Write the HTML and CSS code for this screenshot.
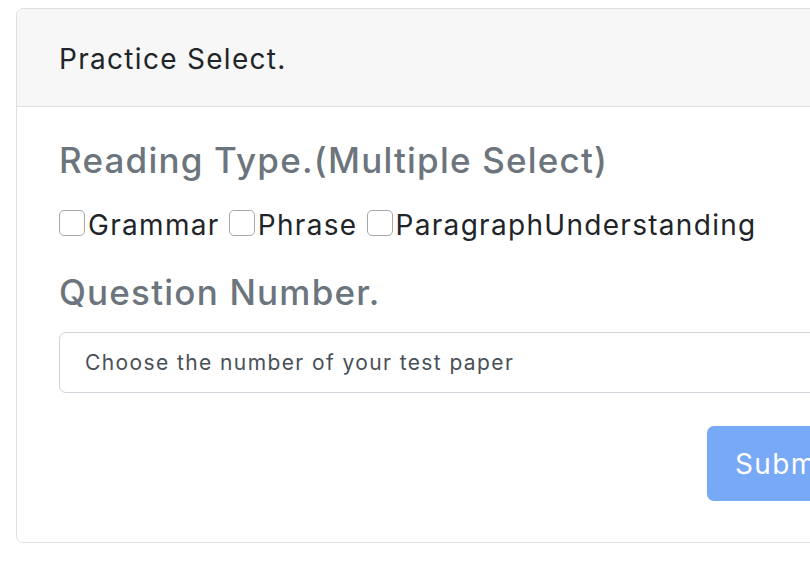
FILE: index.html
```html
<!DOCTYPE html>
<html>
<head>
<meta charset="utf-8">
<link rel="stylesheet" href="styles.css">
</head>
<body>
<div class="card">
  <div class="card-header">Practice Select.</div>
  <div class="card-body">
    <h5 class="section-title">Reading Type.(Multiple Select)</h5>
    <div class="checks"><input type="checkbox" class="chk"><span class="lbl">Grammar</span> <input type="checkbox" class="chk"><span class="lbl">Phrase</span> <input type="checkbox" class="chk"><span class="lbl">ParagraphUnderstanding</span></div>
    <h5 class="section-title">Question Number.</h5>
    <div class="select">Choose the number of your test paper</div>
    <div class="actions"><button class="btn" disabled>Submit</button></div>
  </div>
</div>
</body>
</html>
```
FILE: styles.css
```css
html, body {
  margin: 0;
  padding: 0;
  overflow: hidden;
  background: #fff;
}
body {
  padding: 8px 0 0 16px;
  font-family: Inter, "Liberation Sans", sans-serif;
  color: #212529;
}
.card {
  width: 888px;
  border: 1px solid #dfdfdf;
  border-radius: 7px;
  background: #fff;
  overflow: hidden;
}
.card-header {
  background: #f7f7f7;
  border-bottom: 1px solid #dfdfdf;
  padding: 29px 42px 26px;
  font-size: 28px;
  line-height: 42px;
  letter-spacing: 1.3px;
}
.card-body {
  padding: 32px 42px 41px 42px;
}
.section-title {
  margin: 0;
  font-size: 35px;
  line-height: 42px;
  font-weight: 500;
  color: #6c757d;
  letter-spacing: 1.2px;
}
.checks {
  margin: 23px 0 25px;
  font-size: 28px;
  line-height: 42px;
  color: #212529;
  letter-spacing: 1.3px;
}
.chk {
  appearance: none;
  -webkit-appearance: none;
  width: 26px;
  height: 26px;
  margin: 0 3px 0 0;
  border: 1px solid #a8a8a8;
  border-radius: 5px;
  background: #fff;
  vertical-align: -1px;
}
.select {
  margin-top: 19px;
  height: 61px;
  box-sizing: border-box;
  border: 1px solid #ced4da;
  border-radius: 7px;
  padding: 0 25px;
  font-size: 21px;
  line-height: 59px;
  color: #495057;
  letter-spacing: 1.4px;
}
.actions {
  margin-top: 33px;
  display: flex;
  justify-content: flex-end;
}
.btn {
  font-family: inherit;
  height: 75px;
  padding: 0 28px;
  border: 0;
  border-radius: 7px;
  background: #77a9f7;
  color: #fff;
  font-size: 28px;
  line-height: 42px;
  letter-spacing: 1.3px;
}
```
